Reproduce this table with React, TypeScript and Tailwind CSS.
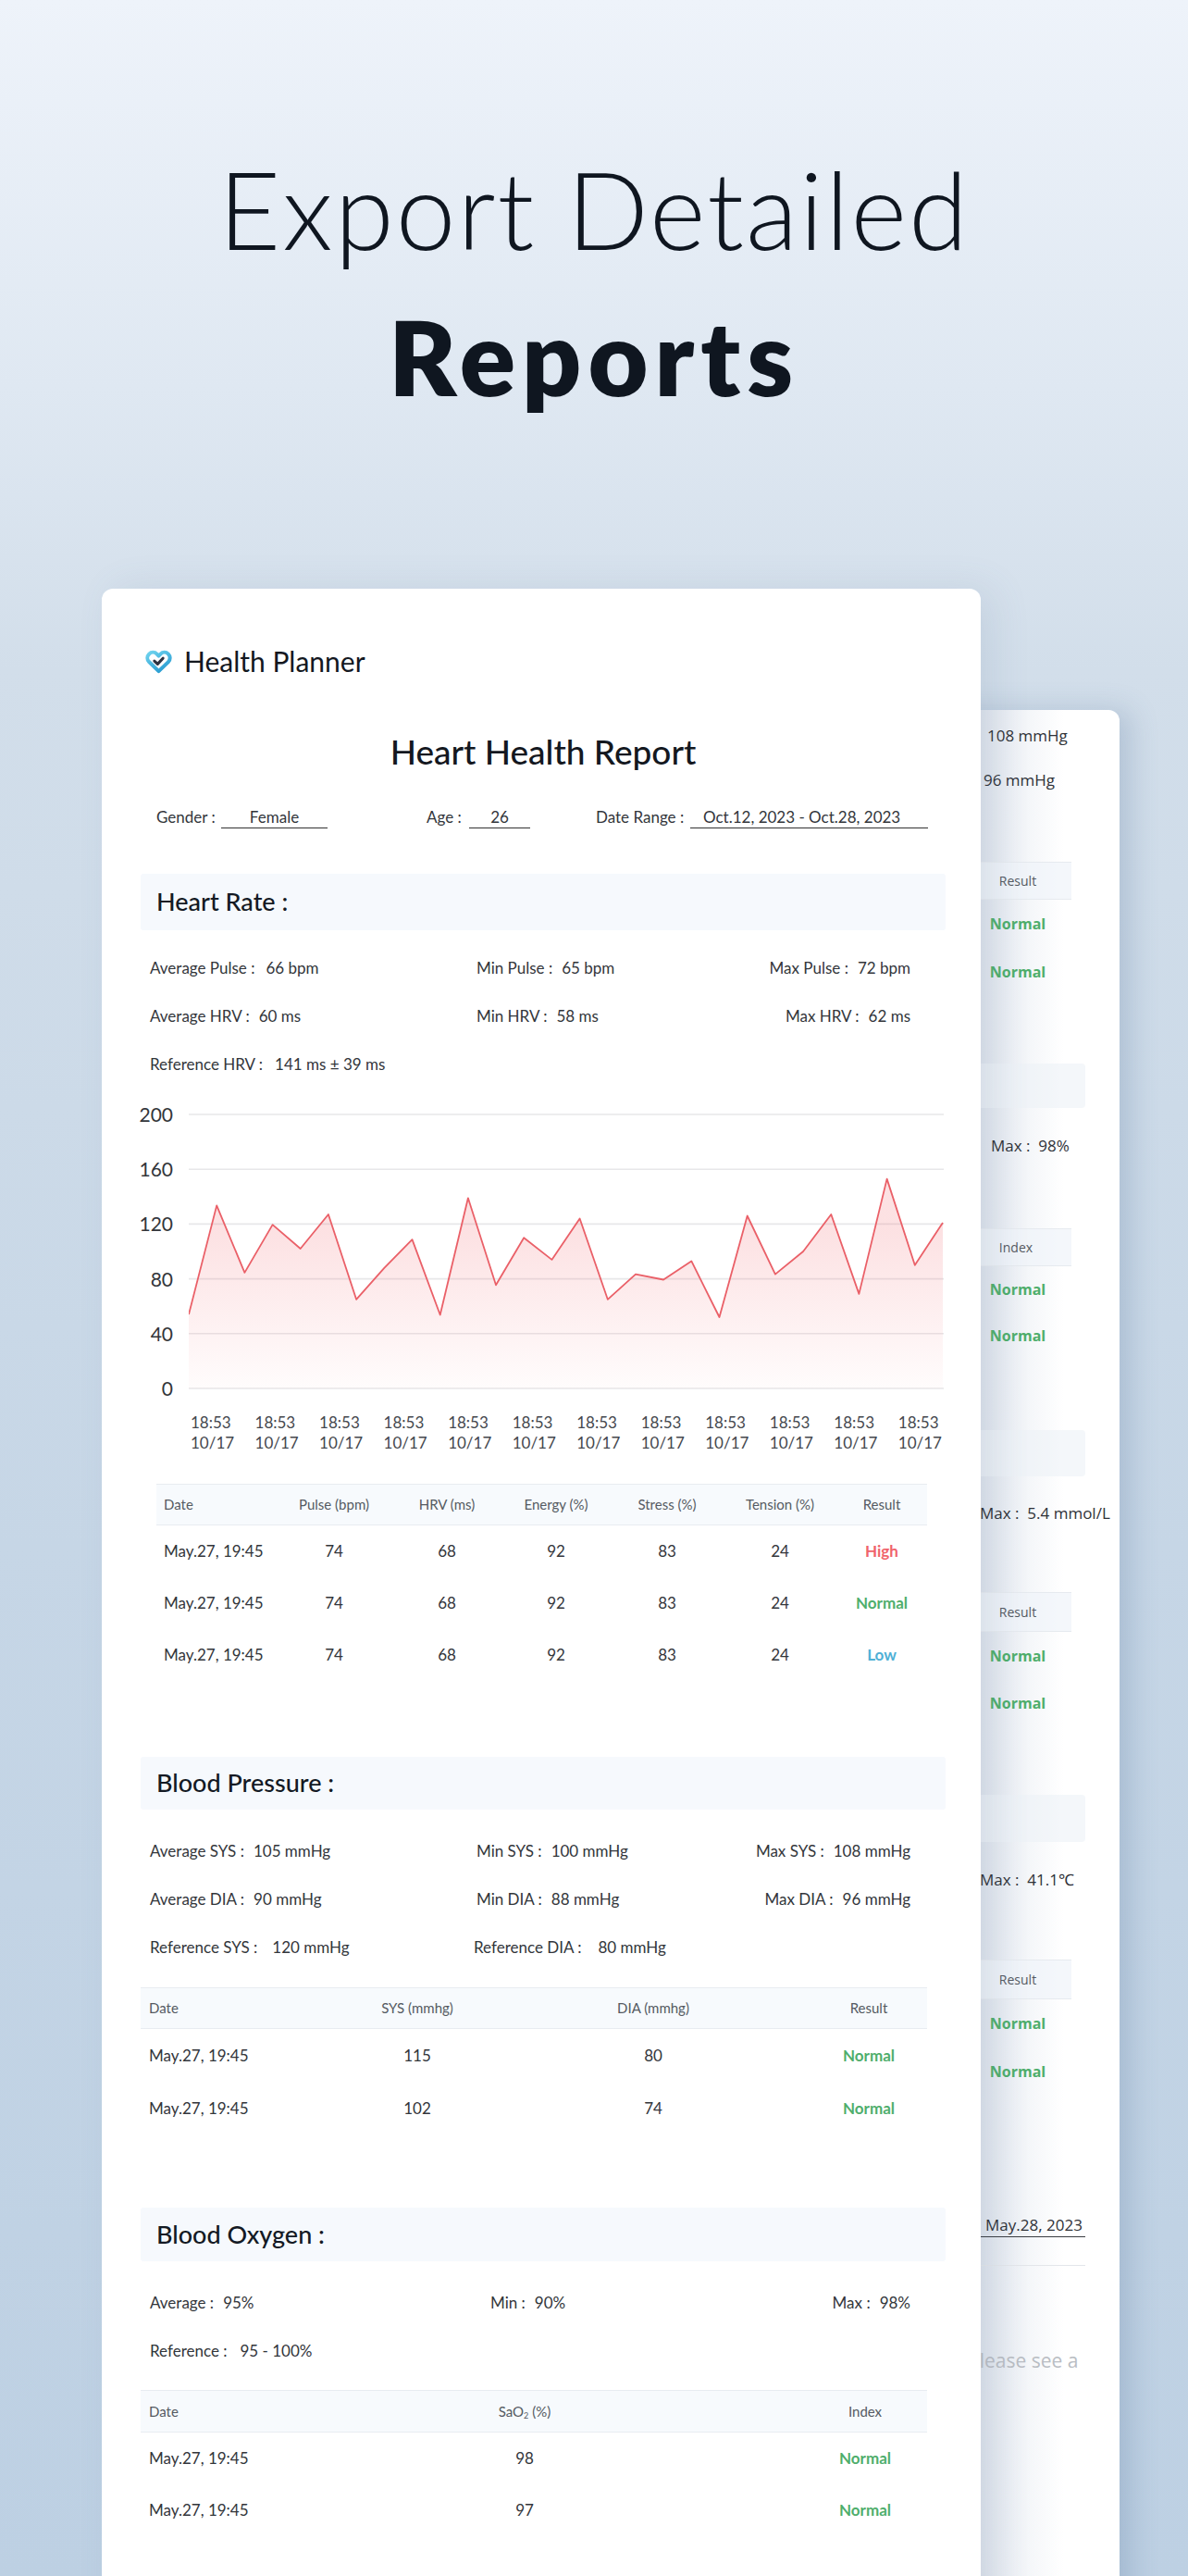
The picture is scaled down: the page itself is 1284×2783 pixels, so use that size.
import type { ReactNode } from 'react'

const pulse = [
  54, 133.5, 84.5, 119.5, 102, 127, 65, 88, 108.7, 53.7, 139, 75.5, 110, 94, 124, 65, 83.4, 79.4, 93, 52,
  126, 83.4, 100, 127, 69, 153, 90, 121,
]

const CHART_W = 816
const CHART_H = 320

function HeartLogo() {
  return (
    <svg width="31" height="27" viewBox="0 0 32 28" fill="none">
      <defs>
        <linearGradient id="hl" x1="0" y1="0" x2="0.6" y2="1">
          <stop offset="0" stopColor="#6fd3ee" />
          <stop offset="1" stopColor="#2c9fd3" />
        </linearGradient>
      </defs>
      <path
        d="M16 25 L5.2 14.6 A6.2 6.2 0 0 1 14 5.8 L16 7.8 L18 5.8 A6.2 6.2 0 0 1 26.8 14.6 Z"
        stroke="url(#hl)"
        strokeWidth="4.2"
        strokeLinejoin="round"
      />
      <path d="M11.2 13.6 L14.8 17 L20.8 10.6" stroke="#2b3140" strokeWidth="3.2" strokeLinecap="round" strokeLinejoin="round" />
    </svg>
  )
}

function PulseChart() {
  const step = (CHART_W - 1) / (pulse.length - 1)
  const pts = pulse.map((v, i) => [i * step, 12 + (200 - v) * 1.48] as const)
  const line = pts.map(([x, y], i) => `${i ? 'L' : 'M'}${x.toFixed(1)} ${y.toFixed(1)}`).join(' ')
  const area = `${line} L${(CHART_W - 1).toFixed(1)} 308 L0 308 Z`
  return (
    <svg width={CHART_W} height={CHART_H} className="ml-[17px] block">
      <defs>
        <linearGradient id="fill" x1="0" y1="0" x2="0" y2="1">
          <stop offset="0.25" stopColor="#f26b72" stopOpacity="0.2" />
          <stop offset="1" stopColor="#f26b72" stopOpacity="0.02" />
        </linearGradient>
      </defs>
      {[0, 1, 2, 3, 4, 5].map((k) => (
        <line key={k} x1="0" x2={CHART_W} y1={12 + k * 59.2} y2={12 + k * 59.2} stroke="#e7e7e9" strokeWidth="1.6" />
      ))}
      <path d={area} fill="url(#fill)" />
      <path d={line} fill="none" stroke="#ea6068" strokeWidth="1.8" strokeLinejoin="round" />
    </svg>
  )
}

function Band({ children, className }: { children: ReactNode; className: string }) {
  return (
    <div
      className={`flex items-center rounded-[3px] bg-[#f6f9fd] pl-[17px] text-[27px] font-medium text-[#141a24] ${className}`}
    >
      {children}
    </div>
  )
}

function Stat({ label, value, gap = 'ml-[10px]' }: { label: string; value: string; gap?: string }) {
  return (
    <div className="flex items-center whitespace-nowrap">
      <span>{label}</span>
      <span className={gap}>{value}</span>
    </div>
  )
}

const statBox = 'pl-[10px] pr-[38px] text-[17px]'
const statRow = 'grid h-[52px] grid-cols-[353px_1fr_auto] items-center'

const resultColor: Record<string, string> = {
  High: 'text-[#f0636b]',
  Normal: 'text-[#4fae6c]',
  Low: 'text-[#4fb0d6]',
}

function Result({ v }: { v: string }) {
  return <span className={`font-bold ${resultColor[v]}`}>{v}</span>
}

const hrCols = 'grid grid-cols-[130px_124px_120px_116px_124px_120px_100px] items-center text-center'
const bpCols = 'grid grid-cols-[200px_198px_312px_140px] items-center text-center'
const oxCols = 'grid grid-cols-[200px_430px_220px] items-center text-center'
const thead = 'h-[45px] border-y border-[#e8ecf1] bg-[#f7fafd] text-[15px] text-[#555a62]'

function FrontCard() {
  const times = Array.from({ length: 12 })
  return (
    <div className="relative z-10 w-[950px] rounded-[12px] bg-white pb-[200px] pl-[42px] pr-[38px] pt-[62px] text-[#33363b] shadow-[14px_0_40px_rgba(90,115,150,0.12)]">
      <div className="flex h-[32px] items-center">
        <span className="ml-[4px] flex">
          <HeartLogo />
        </span>
        <span className="ml-[12px] text-[30px] text-[#14181f]">Health Planner</span>
      </div>

      <div className="mt-[62px] flex h-[40px] items-center justify-center text-[37px] font-medium text-[#14181f]">
        Heart Health Report
      </div>

      <div className="mt-[39px] flex h-[24px] text-[17px]">
        <span className="ml-[17px] flex w-[70px] items-center">Gender :</span>
        <span className="flex w-[115px] items-center justify-center border-b border-[#333]">Female</span>
        <span className="ml-[107px] flex w-[46px] items-center">Age :</span>
        <span className="flex w-[66px] items-center justify-center border-b border-[#333]">26</span>
        <span className="ml-[71px] flex w-[102px] items-center whitespace-nowrap">Date Range :</span>
        <span className="flex w-[257px] items-center border-b border-[#333] pl-[14px]">Oct.12, 2023 - Oct.28, 2023</span>
      </div>

      <Band className="mt-[49px] h-[61px]">Heart Rate :</Band>

      <div className={`mt-[15px] ${statBox}`}>
        <div className={statRow}>
          <Stat label="Average Pulse :" value="66 bpm" gap="ml-[12px]" />
          <Stat label="Min Pulse :" value="65 bpm" />
          <Stat label="Max Pulse :" value="72 bpm" />
        </div>
        <div className={statRow}>
          <Stat label="Average HRV :" value="60 ms" />
          <Stat label="Min HRV :" value="58 ms" />
          <Stat label="Max HRV :" value="62 ms" />
        </div>
        <div className={statRow}>
          <Stat label="Reference HRV :" value="141 ms ± 39 ms" gap="ml-[13px]" />
        </div>
      </div>

      <div className="mt-[16px] flex">
        <div className="flex h-[320px] w-[35px] flex-col items-end justify-between text-[21px] leading-[24px] text-[#33363b]">
          {['200', '160', '120', '80', '40', '0'].map((t) => (
            <span key={t}>{t}</span>
          ))}
        </div>
        <PulseChart />
      </div>

      <div className="ml-[54px] mt-[14px] flex w-[812px] justify-between text-[17px] leading-[22px] text-[#45484e]">
        {times.map((_, i) => (
          <div key={i} className="flex flex-col">
            <span>18:53</span>
            <span>10/17</span>
          </div>
        ))}
      </div>

      <div className="ml-[17px] mt-[33px] w-[833px]">
        <div className={`${hrCols} ${thead}`}>
          <span className="pl-[8px] text-left">Date</span>
          <span>Pulse (bpm)</span>
          <span>HRV (ms)</span>
          <span>Energy (%)</span>
          <span>Stress (%)</span>
          <span>Tension (%)</span>
          <span>Result</span>
        </div>
        {['High', 'Normal', 'Low'].map((r) => (
          <div key={r} className={`${hrCols} h-[56px] text-[17px]`}>
            <span className="pl-[8px] text-left">May.27, 19:45</span>
            <span>74</span>
            <span>68</span>
            <span>92</span>
            <span>83</span>
            <span>24</span>
            <Result v={r} />
          </div>
        ))}
      </div>

      <Band className="mt-[82px] h-[57px]">Blood Pressure :</Band>

      <div className={`mt-[19px] ${statBox}`}>
        <div className={statRow}>
          <Stat label="Average SYS :" value="105 mmHg" />
          <Stat label="Min SYS :" value="100 mmHg" />
          <Stat label="Max SYS :" value="108 mmHg" />
        </div>
        <div className={statRow}>
          <Stat label="Average DIA :" value="90 mmHg" />
          <Stat label="Min DIA :" value="88 mmHg" />
          <Stat label="Max DIA :" value="96 mmHg" />
        </div>
        <div className={statRow}>
          <Stat label="Reference SYS :" value="120 mmHg" gap="ml-[16px]" />
          <div className="-ml-[3px]">
            <Stat label="Reference DIA :" value="80 mmHg" gap="ml-[18px]" />
          </div>
        </div>
      </div>

      <div className="mt-[17px] w-[850px]">
        <div className={`${bpCols} ${thead}`}>
          <span className="pl-[9px] text-left">Date</span>
          <span>SYS (mmhg)</span>
          <span>DIA (mmhg)</span>
          <span className="pl-[14px]">Result</span>
        </div>
        {[
          ['115', '80'],
          ['102', '74'],
        ].map(([s, d]) => (
          <div key={s} className={`${bpCols} h-[57px] text-[17px]`}>
            <span className="pl-[9px] text-left">May.27, 19:45</span>
            <span>{s}</span>
            <span>{d}</span>
            <span className="pl-[14px]">
              <Result v="Normal" />
            </span>
          </div>
        ))}
      </div>

      <Band className="mt-[79px] h-[58px]">Blood Oxygen :</Band>

      <div className={`mt-[19px] ${statBox}`}>
        <div className={statRow}>
          <Stat label="Average :" value="95%" />
          <div className="pl-[15px]">
            <Stat label="Min :" value="90%" />
          </div>
          <Stat label="Max :" value="98%" />
        </div>
        <div className={statRow}>
          <Stat label="Reference :" value="95 - 100%" gap="ml-[14px]" />
        </div>
      </div>

      <div className="mt-[16px] w-[850px]">
        <div className={`${oxCols} ${thead} h-[46px]`}>
          <span className="pl-[9px] text-left">Date</span>
          <span>
            SaO<sub className="text-[9px]">2</sub> (%)
          </span>
          <span className="pl-[86px]">Index</span>
        </div>
        {['98', '97'].map((v) => (
          <div key={v} className={`${oxCols} h-[56px] text-[17px]`}>
            <span className="pl-[9px] text-left">May.27, 19:45</span>
            <span>{v}</span>
            <span className="pl-[86px]">
              <Result v="Normal" />
            </span>
          </div>
        ))}
      </div>
    </div>
  )
}

const backText = 'flex items-center whitespace-nowrap text-[17px] text-[#2f3238]'
const backHead =
  'flex items-center mr-[15px] border-y border-[#e6eaef] bg-[rgba(240,244,249,0.7)] text-[14px] text-[#555a62]'
const backNormal = 'ml-[896px] flex w-[88px] items-center justify-center text-[16px] font-bold text-[#4fae6c]'
const backBand = 'rounded-[4px] bg-[rgba(236,241,247,0.6)]'

function BackCard() {
  return (
    <div className="absolute left-[50px] top-[131px] h-[2100px] w-[1050px] overflow-hidden rounded-[12px] bg-[linear-gradient(90deg,#dde3ec_900px,#f4f6f9_950px,#ffffff_990px)] pr-[37px] pt-[4px] font-['Open_Sans',sans-serif] shadow-[12px_0_30px_rgba(70,100,140,0.22)]">
      <div className={`${backText} ml-[907px] h-[48px]`}>108 mmHg</div>
      <div className={`${backText} ml-[903px] h-[48px]`}>96 mmHg</div>

      <div className={`${backHead} mt-[64px] h-[41px]`}>
        <span className="ml-[896px] w-[88px] text-center">Result</span>
      </div>
      <div className={`${backNormal} h-[52px]`}>Normal</div>
      <div className={`${backNormal} h-[52px]`}>Normal</div>

      <div className={`${backBand} mt-[73px] h-[48px]`} />
      <div className={`${backText} ml-[911px] mt-[21px] h-[40px]`}>Max :&nbsp; 98%</div>
      <div className={`${backHead} mt-[69px] h-[41px]`}>
        <span className="ml-[896px] w-[84px] text-center">Index</span>
      </div>
      <div className={`${backNormal} h-[50px]`}>Normal</div>
      <div className={`${backNormal} h-[50px]`}>Normal</div>

      <div className={`${backBand} mt-[77px] h-[50px]`} />
      <div className={`${backText} ml-[899px] mt-[20px] h-[40px]`}>Max :&nbsp; 5.4 mmol/L</div>
      <div className={`${backHead} mt-[65px] h-[43px]`}>
        <span className="ml-[896px] w-[88px] text-center">Result</span>
      </div>
      <div className={`${backNormal} h-[51px]`}>Normal</div>
      <div className={`${backNormal} h-[51px]`}>Normal</div>

      <div className={`${backBand} mt-[74px] h-[51px]`} />
      <div className={`${backText} ml-[899px] mt-[21px] h-[40px]`}>Max :&nbsp; 41.1℃</div>
      <div className={`${backHead} mt-[66px] h-[43px]`}>
        <span className="ml-[896px] w-[88px] text-center">Result</span>
      </div>
      <div className={`${backNormal} h-[52px]`}>Normal</div>
      <div className={`${backNormal} h-[52px]`}>Normal</div>

      <div className="mt-[128px] flex h-[25px] items-center border-b border-[#3a3d42] text-[17px] text-[#2f3238]">
        <span className="ml-[905px]">May.28, 2023</span>
      </div>
      <div className="mt-[30px] h-[1px] bg-[#e3e6ea]" />
      <div className="mt-[88px] flex h-[30px] items-center whitespace-nowrap text-[21px] text-[#b9bdc3]">
        <span className="ml-[886px]">Please see a</span>
      </div>
    </div>
  )
}

export default function App() {
  return (
    <div className="relative h-[2783px] w-[1284px] overflow-hidden bg-[linear-gradient(180deg,#eef3fa_0%,#dfe8f2_15%,#d2deea_26%,#c6d6e6_60%,#bdd0e3_100%)] font-['Lato',sans-serif]">
      <header className="pt-[168px] text-center text-[#0f1620]">
        <h1 className="text-[116px] font-light leading-none tracking-[2px]">Export Detailed</h1>
        <h2 className="mt-[45px] text-[112px] font-extrabold leading-none tracking-[7px]">Reports</h2>
      </header>
      <div className="relative ml-[110px] mt-[195px] w-[950px]">
        <BackCard />
        <FrontCard />
      </div>
    </div>
  )
}
